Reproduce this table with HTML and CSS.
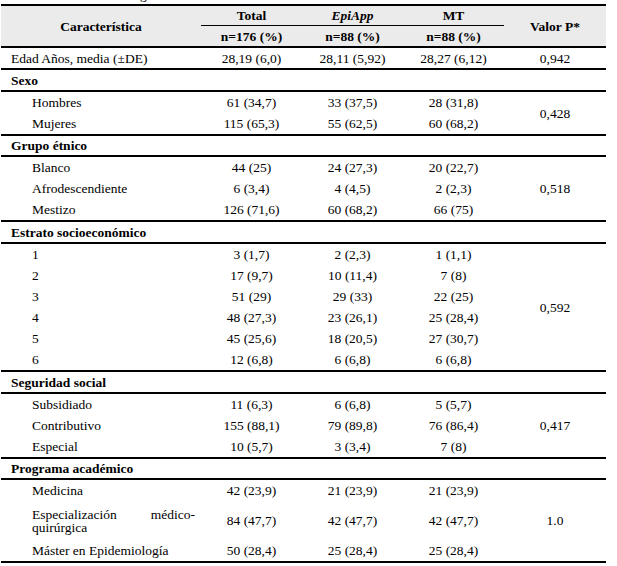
FILE: index.html
```html
<!DOCTYPE html>
<html lang="es">
<head>
<meta charset="utf-8">
<title>Características de los participantes</title>
<link rel="stylesheet" href="styles.css">
</head>
<body>
<div class="caption">Tabla 1. Datos sociodemográficos</div>
<table class="t">
  <colgroup>
    <col class="c1"><col class="cn"><col class="cn"><col class="cn"><col class="cp">
  </colgroup>
  <thead>
    <tr class="h1">
      <th rowspan="2" class="hspan">Característica</th>
      <th class="hg">Total</th>
      <th class="hg"><em>EpiApp</em></th>
      <th class="hg">MT</th>
      <th rowspan="2" class="hspan">Valor P*</th>
    </tr>
    <tr class="h2">
      <th>n=176 (%)</th>
      <th>n=88 (%)</th>
      <th>n=88 (%)</th>
    </tr>
  </thead>
  <tbody>
    <tr class="single end">
      <td class="lab">Edad Años, media (±DE)</td><td>28,19 (6,0)</td><td>28,11 (5,92)</td><td>28,27 (6,12)</td><td>0,942</td>
    </tr>
    <tr class="sec end"><td colspan="5" class="lab">Sexo</td></tr>
    <tr>
      <td class="sub">Hombres</td><td>61 (34,7)</td><td>33 (37,5)</td><td>28 (31,8)</td><td rowspan="2" class="p">0,428</td>
    </tr>
    <tr class="end">
      <td class="sub">Mujeres</td><td>115 (65,3)</td><td>55 (62,5)</td><td>60 (68,2)</td>
    </tr>
    <tr class="sec sec-tight end"><td colspan="5" class="lab">Grupo étnico</td></tr>
    <tr>
      <td class="sub">Blanco</td><td>44 (25)</td><td>24 (27,3)</td><td>20 (22,7)</td><td rowspan="3" class="p">0,518</td>
    </tr>
    <tr>
      <td class="sub">Afrodescendiente</td><td>6 (3,4)</td><td>4 (4,5)</td><td>2 (2,3)</td>
    </tr>
    <tr class="end">
      <td class="sub">Mestizo</td><td>126 (71,6)</td><td>60 (68,2)</td><td>66 (75)</td>
    </tr>
    <tr class="sec end"><td colspan="5" class="lab">Estrato socioeconómico</td></tr>
    <tr>
      <td class="sub">1</td><td>3 (1,7)</td><td>2 (2,3)</td><td>1 (1,1)</td><td rowspan="6" class="p">0,592</td>
    </tr>
    <tr><td class="sub">2</td><td>17 (9,7)</td><td>10 (11,4)</td><td>7 (8)</td></tr>
    <tr><td class="sub">3</td><td>51 (29)</td><td>29 (33)</td><td>22 (25)</td></tr>
    <tr><td class="sub">4</td><td>48 (27,3)</td><td>23 (26,1)</td><td>25 (28,4)</td></tr>
    <tr><td class="sub">5</td><td>45 (25,6)</td><td>18 (20,5)</td><td>27 (30,7)</td></tr>
    <tr class="end"><td class="sub">6</td><td>12 (6,8)</td><td>6 (6,8)</td><td>6 (6,8)</td></tr>
    <tr class="sec end"><td colspan="5" class="lab">Seguridad social</td></tr>
    <tr>
      <td class="sub">Subsidiado</td><td>11 (6,3)</td><td>6 (6,8)</td><td>5 (5,7)</td><td rowspan="3" class="p">0,417</td>
    </tr>
    <tr><td class="sub">Contributivo</td><td>155 (88,1)</td><td>79 (89,8)</td><td>76 (86,4)</td></tr>
    <tr class="end"><td class="sub">Especial</td><td>10 (5,7)</td><td>3 (3,4)</td><td>7 (8)</td></tr>
    <tr class="sec sec-tight end"><td colspan="5" class="lab">Programa académico</td></tr>
    <tr>
      <td class="sub">Medicina</td><td>42 (23,9)</td><td>21 (23,9)</td><td>21 (23,9)</td><td rowspan="3" class="p">1.0</td>
    </tr>
    <tr class="tall">
      <td class="sub just">Especialización médico-quirúrgica</td><td>84 (47,7)</td><td>42 (47,7)</td><td>42 (47,7)</td>
    </tr>
    <tr class="end"><td class="sub">Máster en Epidemiología</td><td>50 (28,4)</td><td>25 (28,4)</td><td>25 (28,4)</td></tr>
  </tbody>
</table>
</body>
</html>
```

FILE: styles.css
```css
html, body {
  margin: 0;
  padding: 0;
  background: #ffffff;
}

body {
  font-family: "Liberation Serif", "Times New Roman", serif;
  font-size: 13.5px;
  color: #000;
}

.caption {
  font-size: 13.5px;
  line-height: 13px;
  height: 13px;
  margin-top: -12px;
  margin-bottom: 3px;
  padding-left: 0;
  white-space: nowrap;
}

.t {
  border-collapse: separate;
  border-spacing: 0;
  table-layout: fixed;
  width: 605px;
  margin-left: 1px;
  line-height: 13px;
}

.c1 { width: 200px; }
.cn { width: 101px; }
.cp { width: 102px; }

th, td {
  padding: 4px 0;
  text-align: center;
  vertical-align: middle;
  font-weight: normal;
}

thead th {
  background: #ebebeb;
  font-weight: bold;
}

.h1 th {
  border-top: 2px solid #000;
  padding-top: 3px;
  padding-bottom: 3px;
}

.h1 th.hg {
  border-bottom: 1px solid #000;
}

.h1 th.hspan,
.h2 th {
  border-bottom: 2px solid #000;
}

.h2 th {
  padding-top: 3.5px;
  padding-bottom: 3.5px;
}

.t em {
  font-style: italic;
}

.end td,
td.p {
  border-bottom: 2px solid #000;
}

.single td,
.sec td {
  padding-top: 3.5px;
  padding-bottom: 3.5px;
}

.sec.sec-tight td {
  padding-top: 3px;
  padding-bottom: 3px;
}

.sec td {
  font-weight: bold;
}

td.lab {
  text-align: left;
  padding-left: 10px;
}

td.sub {
  text-align: left;
  padding-left: 31px;
  padding-right: 6px;
}

td.just {
  text-align: justify;
}

.tall td {
  padding-top: 6.5px;
  padding-bottom: 6.5px;
}
```
